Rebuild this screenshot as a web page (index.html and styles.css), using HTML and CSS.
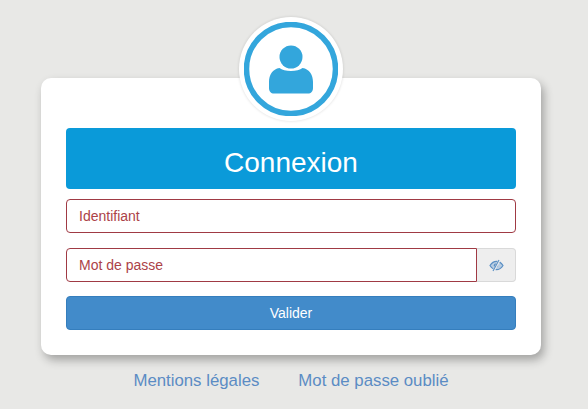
FILE: index.html
```html
<!DOCTYPE html>
<html>
<head>
    <title>Connexion</title>
    <link rel="stylesheet" href="styles.css">
</head>
<body>
    <div class="login">
        <div class="avatar">
            <svg width="94" height="94" viewBox="0 0 94 94">
                <circle cx="47" cy="47" r="44.500" fill="#fff" stroke="#33a6dc" stroke-width="5.500"/>
                <circle cx="47" cy="35" r="11.500" fill="#33a6dc"/>
                <path d="M35.500 46 C40 50 54 50 58.500 46 C65.500 47 69 53 69 60 L69 66 C69 69.500 67 71.500 64 71.500 L30 71.500 C27 71.500 25 69.500 25 66 L25 60 C25 53 28.500 47 35.500 46 Z" fill="#33a6dc"/>
            </svg>
        </div>
        <form class="card">
            <h1 class="title">Connexion</h1>
            <input class="field" type="text" placeholder="Identifiant">
            <div class="pass-row">
                <input class="field field-pass" type="password" placeholder="Mot de passe">
                <span class="eye">
                    <svg width="15" height="13" viewBox="0 0 15 13">
                        <path d="M1 6.500 C3 3.300 5 2.300 7.500 2.300 C10 2.300 12 3.300 14 6.500 C12 9.700 10 10.700 7.500 10.700 C5 10.700 3 9.700 1 6.500 Z" fill="#b9cde2" stroke="#5a8fc4" stroke-width="1.200"/>
                        <circle cx="6.800" cy="6.500" r="2" fill="#5a8fc4"/>
                        <path d="M4.500 12 L10.500 1" stroke="#eeeeee" stroke-width="2.400"/>
                        <path d="M4 12 L10 1" stroke="#5a8fc4" stroke-width="1.100"/>
                    </svg>
                </span>
            </div>
            <button class="submit" type="button">Valider</button>
        </form>
        <div class="links">
            <a href="#">Mentions légales</a>
            <a href="#">Mot de passe oublié</a>
        </div>
    </div>
</body>
</html>
```

FILE: styles.css
```css
body {
    margin: 0;
    height: 409px;
    overflow: hidden;
    background: #e8e8e6;
    font-family: "Liberation Sans", Arial, sans-serif;
}
.login {
    width: 500px;
    margin-left: 41px;
    padding-top: 17px;
}
.avatar {
    position: relative;
    z-index: 1;
    box-sizing: border-box;
    width: 104px;
    height: 104px;
    margin: 0 auto -43px;
    padding: 5px;
    border-radius: 50%;
    background: #fff;
    box-shadow: 0 0 3px rgba(0, 0, 0, 0.15);
}
.avatar svg {
    display: block;
}
.card {
    box-sizing: border-box;
    height: 277px;
    padding: 50px 25px 0;
    background: #fff;
    border-radius: 10px;
    box-shadow: 3px 5px 10px rgba(0, 0, 0, 0.3);
}
.title {
    margin: 0 0 10px;
    height: 61px;
    line-height: 69px;
    text-align: center;
    font-size: 28px;
    font-weight: normal;
    color: #fff;
    background: #0a9ad9;
    border-radius: 4px;
}
.field {
    display: block;
    box-sizing: border-box;
    width: 100%;
    height: 34px;
    padding: 0 12px;
    font-family: inherit;
    font-size: 14px;
    background: #fff;
    border: 1px solid #a03a44;
    border-radius: 4px;
    outline: none;
}
.field::placeholder {
    color: #ac4248;
    opacity: 1;
}
.pass-row {
    display: flex;
    margin: 15px 0 14px;
}
.field-pass {
    flex: 1;
    width: auto;
    min-width: 0;
    border-radius: 0;
    border-top-left-radius: 4px;
    border-bottom-left-radius: 4px;
}
.eye {
    display: flex;
    align-items: center;
    justify-content: center;
    box-sizing: border-box;
    width: 39px;
    height: 34px;
    background: #eeeeee;
    border: 1px solid #d9d9d9;
    border-left: 0;
    border-radius: 0 4px 4px 0;
}
.submit {
    display: block;
    box-sizing: border-box;
    width: 100%;
    height: 34px;
    padding: 0;
    font-family: inherit;
    font-size: 14px;
    color: #fff;
    background: #428bca;
    border: 1px solid #357ebd;
    border-radius: 4px;
}
.links {
    display: flex;
    justify-content: center;
    gap: 39px;
    margin: 16px 0 0;
}
.links a {
    font-size: 16.800px;
    line-height: 20px;
    color: #5b8cc4;
    text-decoration: none;
}
```
